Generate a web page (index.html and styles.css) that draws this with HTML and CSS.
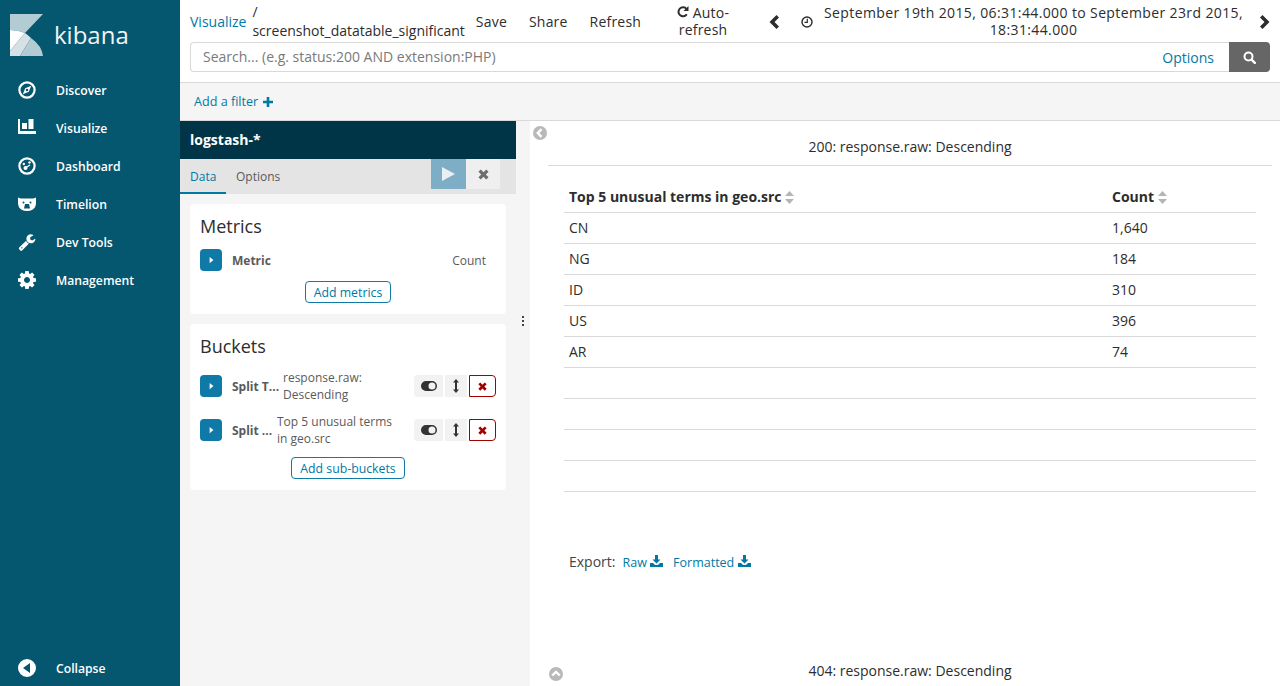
FILE: index.html
```html
<!DOCTYPE html>
<html lang="en">
<head>
    <meta charset="UTF-8">
    <title>Kibana - Visualize</title>
    <link rel="stylesheet" href="styles.css">
</head>
<body>
    <svg class="defs" width="0" height="0">
        <symbol id="i-caret-right" viewBox="0 0 8 12"><path d="M1 1l6 5-6 5z"/></symbol>
        <symbol id="i-times" viewBox="0 0 12 12"><path d="M0.500 3l2.500-2.500 3 3 3-3 2.500 2.500-3 3 3 3-2.500 2.500-3-3-3 3-2.500-2.500 3-3z"/></symbol>
        <symbol id="i-toggle" viewBox="0 0 16 10"><path d="M5 0h6a5 5 0 0 1 0 10H5A5 5 0 0 1 5 0zm6 1.500a3.500 3.500 0 1 0 0 7 3.500 3.500 0 0 0 0-7z"/></symbol>
        <symbol id="i-arrows-v" viewBox="0 0 6 14"><path d="M3 0l3 3.500H4v7h2L3 14 0 10.500h2v-7H0z"/></symbol>
        <symbol id="i-download" viewBox="0 0 13 12"><path d="M5 0h3v4.500h2.500L6.500 8.500 2.500 4.500H5zM0 8h3l2 2h3l2-2h3v4H0z"/></symbol>
        <symbol id="i-sort" viewBox="0 0 9 13"><path d="M4.500 0L9 5H0zM0 8h9l-4.500 5z"/></symbol>
        <symbol id="i-chevron" viewBox="0 0 10 14"><path d="M7.500 0L10 2.500 5.500 7 10 11.500 7.500 14 0.500 7z"/></symbol>
    </svg>

    <nav class="sidebar">
        <div class="brand">
            <svg class="brand-logo" width="33" height="42" viewBox="0 0 33 42">
                <path fill="#b3cbd3" d="M0 0h33L15 19Q8 16 0 16z"/>
                <path fill="#ffffff" d="M0 16q8 0 15 3L0 37z"/>
                <path fill="#d5e1e5" d="M15 19q3 2 6 5L10 42H0v-5z"/>
                <path fill="#b3cbd3" d="M21 24q11 8 12 18H10z"/>
            </svg>
            <span class="brand-name">kibana</span>
        </div>
        <ul class="nav-list">
            <li class="nav-item">
                <svg class="nav-icon" viewBox="0 0 18 18"><circle cx="9" cy="9" r="7.600" fill="none" stroke="#fff" stroke-width="2.200"/><path fill="#fff" d="M13.200 4.800L10.800 10.800 4.800 13.200 7.200 7.200zM9 7.800a1.200 1.200 0 1 0 0 2.400 1.200 1.200 0 0 0 0-2.400z"/></svg>
                Discover
            </li>
            <li class="nav-item">
                <svg class="nav-icon" viewBox="0 1 18 18"><path fill="#fff" d="M0 0h2v13h16v3H0zM4 5h5v6H4zM10.500 1h5v10h-5z"/></svg>
                Visualize
            </li>
            <li class="nav-item">
                <svg class="nav-icon" viewBox="0 0 18 18"><circle cx="9" cy="9" r="7.600" fill="none" stroke="#fff" stroke-width="2.200"/><circle cx="5.800" cy="7" r="1.200" fill="#fff"/><circle cx="7.500" cy="11" r="2" fill="#fff"/><circle cx="11.500" cy="5.500" r="1.200" fill="#fff"/><path d="M8 10.500l4-2.500" stroke="#fff" stroke-width="1.400"/></svg>
                Dashboard
            </li>
            <li class="nav-item">
                <svg class="nav-icon" viewBox="0 -2 18 18"><path fill="#fff" fill-rule="evenodd" d="M0 .5l2.500 1h13l2.500-1V6q0 5-4 7-2 1-5 1t-5-1Q0 11 0 6zM5.500 4.500a1 1 0 1 0 0 2 1 1 0 0 0 0-2zm7 0a1 1 0 1 0 0 2 1 1 0 0 0 0-2zM7 7h4l1 4.500H6z"/></svg>
                Timelion
            </li>
            <li class="nav-item">
                <svg class="nav-icon" viewBox="0 0 1792 1792"><path fill="#fff" d="M448 1472q0-26-19-45t-45-19-45 19-19 45 19 45 45 19 45-19 19-45zm644-420l-682 682q-37 37-90 37-52 0-91-37l-106-108q-38-36-38-90 0-53 38-91l681-681q39 98 114.500 173.500t173.500 114.500zm634-435q0 39-23 106-47 134-164.500 217.500t-258.500 83.500q-185 0-316.500-131.500t-131.500-316.500 131.500-316.500 316.500-131.500q58 0 121.500 16.500t107.500 46.500q16 11 16 28t-16 28l-293 169v224l193 107q5-3 79-48.500t135.500-81 70.500-35.500q15 0 23.500 10t8.500 25z"/></svg>
                Dev Tools
            </li>
            <li class="nav-item">
                <svg class="nav-icon" viewBox="128 128 1536 1536"><path fill="#fff" d="M1152 896q0-106-75-181t-181-75-181 75-75 181 75 181 181 75 181-75 75-181zm512-109v222q0 12-8 23t-20 13l-185 28q-19 54-39 91 35 50 107 138 10 12 10 25t-9 23q-27 37-99 108t-94 71q-12 0-26-9l-138-108q-44 23-91 38-16 136-29 186-7 28-36 28h-222q-14 0-24.500-8.500t-11.500-21.500l-28-184q-49-16-90-37l-141 107q-10 9-25 9-14 0-25-11-126-114-165-168-7-10-7-23 0-12 8-23 15-21 51-66.500t54-70.500q-27-50-41-99l-183-27q-13-2-21-12.500t-8-23.500v-222q0-12 8-23t19-13l186-28q14-46 39-92-40-57-107-138-10-12-10-24 0-10 9-23 26-36 98.500-107.500t94.500-71.500q13 0 26 10l138 107q44-23 91-38 16-136 29-186 7-28 36-28h222q14 0 24.500 8.500t11.500 21.500l28 184q49 16 90 37l142-107q9-9 24-9 13 0 25 10 129 119 165 170 7 8 7 22 0 12-8 23-15 21-51 66.500t-54 70.500q26 50 41 98l183 28q13 2 21 12.500t8 23.500z"/></svg>
                Management
            </li>
        </ul>
        <div class="nav-item nav-collapse">
            <svg class="nav-icon" viewBox="0 0 18 18"><path fill="#fff" fill-rule="evenodd" d="M9 0a9 9 0 1 1 0 18A9 9 0 0 1 9 0zm3 4L5 9l7 5z"/></svg>
            Collapse
        </div>
    </nav>

    <main class="main">
        <header class="topbar">
            <div class="topbar-row">
                <a class="crumb-link">Visualize</a>
                <div class="crumb-name">/<br>screenshot_datatable_significant</div>
                <span class="top-action action-save">Save</span>
                <span class="top-action action-share">Share</span>
                <span class="top-action action-refresh">Refresh</span>
                <span class="top-action action-auto">
                    <svg class="refresh-icon" viewBox="0 0 12 12"><path fill="none" stroke="#2d2d2d" stroke-width="2" d="M9.800 8.200A4.500 4.500 0 1 1 9.500 3"/><path fill="#2d2d2d" d="M11.500 0v5h-5z"/></svg>
                    Auto-<br>refresh
                </span>
                <svg class="time-chevron" viewBox="0 0 10 14"><use href="#i-chevron"/></svg>
                <svg class="clock-icon" viewBox="0 0 12 12"><circle cx="6" cy="6" r="5" fill="none" stroke="#2d2d2d" stroke-width="1.400"/><path fill="none" stroke="#2d2d2d" stroke-width="1.200" d="M6.300 2.800v3.600H3.500"/></svg>
                <div class="time-range">September 19th 2015, 06:31:44.000 to September 23rd 2015,<br>18:31:44.000</div>
                <svg class="time-chevron chevron-next" viewBox="0 0 10 14"><use href="#i-chevron"/></svg>
            </div>
            <div class="search-bar">
                <div class="search-input">
                    <span class="search-placeholder">Search... (e.g. status:200 AND extension:PHP)</span>
                    <a class="search-options">Options</a>
                </div>
                <div class="search-button">
                    <svg width="13" height="13" viewBox="0 0 13 13"><circle cx="5.500" cy="5.500" r="4" fill="none" stroke="#fff" stroke-width="2"/><path stroke="#fff" stroke-width="2.400" stroke-linecap="round" d="M8.800 8.800l3 3"/></svg>
                </div>
            </div>
        </header>

        <div class="filter-bar">
            <a class="add-filter">Add a filter</a>
            <svg class="plus-icon" viewBox="0 0 10 10"><path fill="#0079a5" d="M3.700 0h2.600v3.700H10v2.600H6.300V10H3.700V6.300H0V3.700h3.700z"/></svg>
        </div>

        <div class="editor">
            <aside class="side-panel">
                <div class="index-title">logstash-*</div>
                <div class="panel-tabs">
                    <span class="panel-tab tab-active">Data</span>
                    <span class="panel-tab">Options</span>
                    <div class="panel-actions">
                        <div class="btn-apply"><svg width="13" height="14" viewBox="0 0 13 14"><path fill="#e8f0f4" d="M0 0l13 7-13 7z"/></svg></div>
                        <div class="btn-discard"><svg width="11" height="11" fill="#6d6d6d"><use href="#i-times"/></svg></div>
                    </div>
                </div>

                <section class="card">
                    <h2 class="card-title">Metrics</h2>
                    <div class="agg-row">
                        <div class="agg-toggle"><svg width="5" height="8"><use href="#i-caret-right"/></svg></div>
                        <span class="agg-label">Metric</span>
                        <span class="agg-value agg-value-right">Count</span>
                    </div>
                    <div class="card-footer"><a class="btn-outline">Add metrics</a></div>
                </section>

                <section class="card">
                    <h2 class="card-title">Buckets</h2>
                    <div class="agg-row agg-row-bucket">
                        <div class="agg-toggle"><svg width="5" height="8"><use href="#i-caret-right"/></svg></div>
                        <span class="agg-label label-wide">Split T...</span>
                        <span class="agg-value">response.raw:<br>Descending</span>
                        <div class="agg-controls">
                            <div class="ctl ctl-toggle"><svg width="16" height="10" fill="#333"><use href="#i-toggle"/></svg></div>
                            <div class="ctl ctl-move"><svg width="6" height="14" fill="#333"><use href="#i-arrows-v"/></svg></div>
                            <div class="ctl ctl-remove"><svg width="9" height="9" fill="#a30000"><use href="#i-times"/></svg></div>
                        </div>
                    </div>
                    <div class="agg-row agg-row-bucket">
                        <div class="agg-toggle"><svg width="5" height="8"><use href="#i-caret-right"/></svg></div>
                        <span class="agg-label label-narrow">Split ...</span>
                        <span class="agg-value">Top 5 unusual terms<br>in geo.src</span>
                        <div class="agg-controls">
                            <div class="ctl ctl-toggle"><svg width="16" height="10" fill="#333"><use href="#i-toggle"/></svg></div>
                            <div class="ctl ctl-move"><svg width="6" height="14" fill="#333"><use href="#i-arrows-v"/></svg></div>
                            <div class="ctl ctl-remove"><svg width="9" height="9" fill="#a30000"><use href="#i-times"/></svg></div>
                        </div>
                    </div>
                    <div class="card-footer footer-tight"><a class="btn-outline">Add sub-buckets</a></div>
                </section>
            </aside>

            <div class="resizer"><span class="resizer-dots"></span></div>

            <section class="vis-panel">
                <div class="round-icon icon-collapse">
                    <svg width="14" height="14" viewBox="0 0 14 14"><circle cx="7" cy="7" r="7" fill="#b9b9b9"/><path fill="none" stroke="#fff" stroke-width="2.400" d="M8.500 3.200L4.800 7l3.700 3.800"/></svg>
                </div>
                <div class="split-title">200: response.raw: Descending</div>
                <table class="data-table">
                    <thead>
                        <tr>
                            <th class="col-term">Top 5 unusual terms in geo.src <svg class="sort-icon" width="9" height="13"><use href="#i-sort"/></svg></th>
                            <th class="col-count">Count <svg class="sort-icon" width="9" height="13"><use href="#i-sort"/></svg></th>
                        </tr>
                    </thead>
                    <tbody>
                        <tr><td>CN</td><td>1,640</td></tr>
                        <tr><td>NG</td><td>184</td></tr>
                        <tr><td>ID</td><td>310</td></tr>
                        <tr><td>US</td><td>396</td></tr>
                        <tr><td>AR</td><td>74</td></tr>
                        <tr><td>&nbsp;</td><td></td></tr>
                        <tr><td>&nbsp;</td><td></td></tr>
                        <tr><td>&nbsp;</td><td></td></tr>
                        <tr><td>&nbsp;</td><td></td></tr>
                    </tbody>
                </table>
                <div class="export-row">
                    <span class="export-label">Export:</span>
                    <a class="export-link">Raw <svg width="13" height="12" fill="#0079a5"><use href="#i-download"/></svg></a>
                    <a class="export-link">Formatted <svg width="13" height="12" fill="#0079a5"><use href="#i-download"/></svg></a>
                </div>
                <div class="round-icon icon-up">
                    <svg width="14" height="14" viewBox="0 0 14 14"><circle cx="7" cy="7" r="7" fill="#b9b9b9"/><path fill="none" stroke="#fff" stroke-width="2.400" d="M3.200 8.500L7 4.800l3.800 3.700"/></svg>
                </div>
                <div class="split-title title-next">404: response.raw: Descending</div>
            </section>
        </div>
    </main>
</body>
</html>
```

FILE: styles.css
```css
* {
    margin: 0;
    padding: 0;
    box-sizing: border-box;
}

html, body {
    height: 100%;
    overflow: hidden;
}

body {
    font-family: "Open Sans", sans-serif;
    font-size: 14px;
    color: #2d2d2d;
    background: white;
    display: flex;
}

a {
    color: #0079a5;
}

.defs {
    position: absolute;
}

/* sidebar */
.sidebar {
    width: 180px;
    flex-shrink: 0;
    background: #05566f;
    color: white;
    display: flex;
    flex-direction: column;
}

.brand {
    display: flex;
    align-items: flex-start;
    height: 71px;
    padding: 14px 0 0 10px;
}

.brand-name {
    font-size: 24px;
    line-height: 42px;
    margin-left: 11px;
    color: #f0f5f7;
}

.nav-list {
    list-style: none;
}

.nav-item {
    display: flex;
    align-items: center;
    height: 38px;
    padding-left: 18px;
    font-size: 12.200px;
    font-weight: 600;
}

.nav-icon {
    width: 18px;
    height: 18px;
    margin-right: 20px;
    flex-shrink: 0;
}

.nav-collapse {
    margin-top: auto;
    margin-bottom: -1px;
}

/* top bar */
.main {
    flex: 1;
    min-width: 0;
    display: flex;
    flex-direction: column;
}

.topbar {
    height: 83px;
    padding: 0 10px 0 10px;
    border-bottom: 1px solid #d9d9d9;
}

.topbar-row {
    display: flex;
    align-items: center;
    height: 42px;
    padding-top: 1px;
    line-height: 17px;
}

.crumb-link {
    margin-right: 6px;
}

.crumb-name {
    margin-top: -1px;
    line-height: 19px;
    white-space: nowrap;
}

.top-action {
    flex-shrink: 0;
    letter-spacing: 0.200px;
}

.action-save {
    margin-left: 11px;
}

.action-share {
    margin-left: 22px;
}

.action-refresh {
    margin-left: 22px;
}

.action-auto {
    margin-left: 35px;
    margin-top: -2px;
    width: 54px;
    text-align: center;
}

.refresh-icon {
    width: 12px;
    height: 12px;
}

.time-chevron {
    width: 10px;
    height: 14px;
    margin-left: 39px;
    fill: #2d2d2d;
    flex-shrink: 0;
}

.chevron-next {
    margin-left: 17px;
    transform: scaleX(-1);
}

.clock-icon {
    width: 12px;
    height: 12px;
    margin-left: 22px;
    flex-shrink: 0;
}

.time-range {
    margin-left: 11px;
    margin-top: -2px;
    text-align: center;
    white-space: nowrap;
    letter-spacing: 0.380px;
}

.search-bar {
    display: flex;
    height: 30px;
}

.search-input {
    flex: 1;
    display: flex;
    align-items: center;
    justify-content: space-between;
    padding: 0 15px 0 12px;
    border: 1px solid #d9d9d9;
    border-right: none;
    border-radius: 4px 0 0 4px;
}

.search-placeholder {
    color: #7a7a7a;
    margin-bottom: 2px;
}

.search-button {
    width: 41px;
    background: #666666;
    border-radius: 0 4px 4px 0;
    display: flex;
    align-items: center;
    justify-content: center;
}

.filter-bar {
    height: 38px;
    flex-shrink: 0;
    padding: 0 14px;
    display: flex;
    align-items: center;
    background: #f5f5f5;
    border-bottom: 1px solid #d9d9d9;
    font-size: 12.600px;
}

.plus-icon {
    width: 10px;
    height: 10px;
    margin-left: 5px;
}

/* editor */
.editor {
    flex: 1;
    min-height: 0;
    display: flex;
    overflow: hidden;
}

.side-panel {
    width: 336px;
    flex-shrink: 0;
    background: #f5f5f5;
}

.index-title {
    height: 38px;
    line-height: 38px;
    padding-left: 10px;
    background: #003547;
    color: white;
    font-weight: 700;
}

.panel-tabs {
    display: flex;
    height: 35px;
    background: #e4e4e4;
    margin-bottom: 10px;
    font-size: 12px;
    color: #5a5a5a;
}

.panel-tab {
    padding: 0 10px;
    line-height: 35px;
    height: 35px;
}

.tab-active {
    color: #0079a5;
    border-bottom: 2px solid #0079a5;
    padding: 0 10px;
    width: 46px;
}

.panel-actions {
    margin-left: auto;
    margin-right: 16px;
    display: flex;
    height: 30px;
}

.btn-apply {
    width: 35px;
    background: #7eaec6;
    display: flex;
    align-items: center;
    justify-content: center;
}

.btn-discard {
    width: 34px;
    background: #efefef;
    display: flex;
    align-items: center;
    justify-content: center;
}

.card {
    background: white;
    border-radius: 4px;
    margin: 0 10px 10px;
    padding: 10px;
}

.card-title {
    font-size: 18px;
    font-weight: 400;
    line-height: 25px;
    margin-bottom: 10px;
}

.agg-row {
    display: flex;
    align-items: center;
    height: 22px;
    font-size: 12px;
    color: #5a5a5a;
}

.agg-row-bucket {
    height: 34px;
    margin-bottom: 10px;
    line-height: 17px;
}

.agg-toggle {
    width: 22px;
    height: 22px;
    flex-shrink: 0;
    background: #0f7aa8;
    border-radius: 4px;
    fill: white;
    display: flex;
    align-items: center;
    justify-content: center;
    margin-right: 10px;
}

.agg-label {
    font-weight: 700;
}

.label-wide {
    width: 51px;
}

.label-narrow {
    width: 45px;
}

.agg-value-right {
    margin-left: auto;
    margin-right: 10px;
}

.agg-controls {
    margin-left: auto;
    display: flex;
    gap: 2px;
}

.ctl {
    height: 22px;
    background: #f2f2f2;
    display: flex;
    align-items: center;
    justify-content: center;
}

.ctl-toggle {
    width: 29px;
    border-radius: 4px 0 0 4px;
}

.ctl-move {
    width: 22px;
}

.ctl-remove {
    width: 27px;
    background: white;
    border: 1px solid #a30000;
    border-radius: 0 4px 4px 0;
}

.card-footer {
    display: flex;
    justify-content: center;
    margin-top: 10px;
    padding-bottom: 1px;
}

.footer-tight {
    margin-top: 0;
}

.btn-outline {
    display: block;
    height: 22px;
    line-height: 22px;
    padding: 0 8px;
    font-size: 12.300px;
    border: 1px solid #0f7aa8;
    border-radius: 4px;
}

.resizer {
    width: 14px;
    flex-shrink: 0;
    background: #f5f5f5;
    display: flex;
    align-items: center;
    justify-content: center;
    padding-bottom: 166px;
}

.resizer-dots {
    width: 2px;
    height: 10px;
    background: repeating-linear-gradient(#444 0 2px, transparent 2px 4px);
}

/* visualization */
.vis-panel {
    flex: 1;
    min-width: 0;
    position: relative;
    padding: 0 8px 0 18px;
}

.round-icon {
    position: absolute;
    line-height: 0;
}

.icon-collapse {
    left: 3px;
    top: 5px;
}

.icon-up {
    left: 19px;
    top: 546px;
}

.split-title {
    text-align: center;
    height: 45px;
    padding-top: 16px;
    line-height: 20px;
    border-bottom: 1px solid #d9d9d9;
}

.title-next {
    border-bottom: none;
    margin-top: 73px;
}

.data-table {
    width: 692px;
    margin: 15px 0 0 16px;
    border-collapse: collapse;
}

.data-table th,
.data-table td {
    height: 31px;
    padding: 5px;
    text-align: left;
    border-bottom: 1px solid #d9d9d9;
    line-height: 20px;
}

.data-table th {
    padding: 6px 5px 4px;
}

.col-term {
    width: 543px;
}

.sort-icon {
    fill: #b4b4b4;
    vertical-align: -2px;
}

.export-row {
    display: flex;
    align-items: center;
    margin: 60px 0 0 21px;
    height: 20px;
    font-size: 14px;
    color: #444;
}

.export-label {
    margin-right: 7px;
}

.export-link {
    font-size: 12.500px;
    margin-right: 10px;
    padding-top: 1px;
}
```
